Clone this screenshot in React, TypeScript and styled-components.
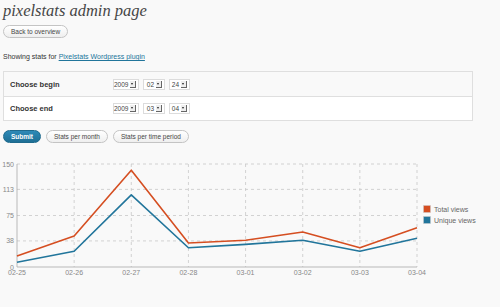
import React from 'react';
import styled, { createGlobalStyle } from 'styled-components';

const colors = {
  page: '#f9f9f9',
  text: '#333333',
  title: '#464646',
  link: '#21759b',
  total: '#d54e21',
  unique: '#21759b',
  border: '#dfdfdf',
  grid: '#c8c8c8',
  axisText: '#888888',
};

const GlobalStyle = createGlobalStyle`
  html, body {
    margin: 0;
    padding: 0;
    background: ${colors.page};
  }
  body {
    font-family: 'Liberation Sans', Arial, sans-serif;
    color: ${colors.text};
  }
`;

const Page = styled.div`
  width: 500px;
  height: 307px;
  overflow: hidden;
  padding: 0 3px;
  box-sizing: border-box;
`;

const Title = styled.h2`
  margin: 0;
  padding-top: 1px;
  font-family: 'Liberation Serif', Georgia, serif;
  font-style: italic;
  font-weight: normal;
  font-size: 16.5px;
  line-height: 20px;
  color: ${colors.title};
`;

const PillButton = styled.button<{ $primary?: boolean }>`
  box-sizing: border-box;
  height: 13px;
  padding: 0 7px;
  border-radius: 7px;
  font-family: 'Liberation Sans', Arial, sans-serif;
  font-size: 6.5px;
  line-height: 11px;
  cursor: pointer;
  border: 1px solid ${(p) => (p.$primary ? '#1e6a8d' : '#c4c4c4')};
  background: ${(p) => (p.$primary ? 'linear-gradient(#2e8ab8, #1f6f95)' : 'linear-gradient(#ffffff, #efefef)')};
  color: ${(p) => (p.$primary ? '#ffffff' : '#464646')};
  font-weight: ${(p) => (p.$primary ? 'bold' : 'normal')};
`;

const BackRow = styled.div`
  margin-top: 4px;
  display: flex;
`;

const Intro = styled.p`
  margin: 14px 0 0;
  font-size: 7px;
  line-height: 9px;

  a {
    color: ${colors.link};
    text-decoration: underline;
  }
`;

const FormTable = styled.div`
  margin-top: 10px;
  width: 470px;
  border: 1px solid ${colors.border};
  box-sizing: border-box;
`;

const FormRow = styled.div<{ $alt?: boolean }>`
  display: grid;
  grid-template-columns: 103px auto;
  align-items: center;
  height: 24px;
  padding-left: 6px;
  background: ${(p) => (p.$alt ? '#ffffff' : '#f9f9f9')};
  border-top: ${(p) => (p.$alt ? `1px solid ${colors.border}` : 'none')};
  box-sizing: border-box;
`;

const RowLabel = styled.span`
  font-weight: bold;
  font-size: 7.5px;
  color: #333;
`;

const Selects = styled.div`
  display: flex;
  gap: 4px;
`;

const FakeSelect = styled.span<{ $w: number }>`
  display: inline-flex;
  align-items: center;
  justify-content: flex-end;
  gap: 2px;
  width: ${(p) => p.$w}px;
  height: 11px;
  padding-right: 2px;
  box-sizing: border-box;
  background: #fff;
  border: 1px solid #dcdcdc;
  font-size: 6.5px;
  color: #444;
`;

const Arrow = styled.span`
  display: inline-block;
  width: 5px;
  height: 6px;
  background: #eee;
  border-right: 1px solid #666;
  border-bottom: 1px solid #666;
  position: relative;

  &::after {
    content: '';
    position: absolute;
    left: 1px;
    top: 2px;
    border-left: 1.5px solid transparent;
    border-right: 1.5px solid transparent;
    border-top: 2px solid #222;
  }
`;

const ButtonRow = styled.div`
  display: flex;
  gap: 5px;
  margin-top: 9px;
`;

const ChartWrap = styled.div`
  margin: 14px 0 0 -3px;
`;

const dates = ['02-25', '02-26', '02-27', '02-28', '03-01', '03-02', '03-03', '03-04'];
const total = [16, 45, 141, 35, 39, 51, 28, 57];
const unique = [7, 23, 105, 28, 33, 39, 23, 42];
const ticks = [0, 38, 75, 113, 150];

const X0 = 17;
const X1 = 417;
const YTOP = 7;
const YBOT = 110;

const px = (i: number) => X0 + ((X1 - X0) / (dates.length - 1)) * i;
const py = (v: number) => YBOT - (v / 150) * (YBOT - YTOP);
const linePoints = (d: number[]) => d.map((v, i) => `${px(i)},${py(v)}`).join(' ');

const Chart: React.FC = () => (
  <svg width="500" height="125" viewBox="0 0 500 125">
    {ticks.slice(1).map((t) => (
      <line key={t} x1={X0} x2={X1} y1={py(t)} y2={py(t)} stroke={colors.grid} strokeWidth="0.8" strokeDasharray="3 3" />
    ))}
    {dates.slice(1).map((d, i) => (
      <line key={d} x1={px(i + 1)} x2={px(i + 1)} y1={YTOP} y2={YBOT} stroke={colors.grid} strokeWidth="0.8" strokeDasharray="3 3" />
    ))}
    <line x1={X0} x2={X0} y1={YTOP} y2={YBOT} stroke="#aaa" strokeWidth="0.8" />
    <line x1={X0} x2={X1} y1={YBOT} y2={YBOT} stroke="#aaa" strokeWidth="0.8" />
    {ticks.map((t) => (
      <text key={t} x={X0 - 3} y={py(t) + 2.5} fontSize="7" textAnchor="end" fill={colors.axisText} fontFamily="Liberation Sans, Arial, sans-serif">
        {t}
      </text>
    ))}
    {dates.map((d, i) => (
      <text key={d} x={px(i)} y={YBOT + 8} fontSize="7" textAnchor="middle" fill={colors.axisText} fontFamily="Liberation Sans, Arial, sans-serif">
        {d}
      </text>
    ))}
    <polyline points={linePoints(total)} fill="none" stroke={colors.total} strokeWidth="1.6" strokeLinejoin="round" />
    <polyline points={linePoints(unique)} fill="none" stroke={colors.unique} strokeWidth="1.6" strokeLinejoin="round" />
    <rect x="423.5" y="48.5" width="7" height="7" fill={colors.total} stroke="#ccc" strokeWidth="0.5" />
    <rect x="423.5" y="59.5" width="7" height="7" fill={colors.unique} stroke="#ccc" strokeWidth="0.5" />
    <text x="434" y="55" fontSize="7" fill="#666" fontFamily="Liberation Sans, Arial, sans-serif">Total views</text>
    <text x="434" y="66" fontSize="7" fill="#666" fontFamily="Liberation Sans, Arial, sans-serif">Unique views</text>
  </svg>
);

const DateSelects: React.FC<{ year: string; month: string; day: string }> = ({ year, month, day }) => (
  <Selects>
    <FakeSelect $w={26}>{year}<Arrow /></FakeSelect>
    <FakeSelect $w={22}>{month}<Arrow /></FakeSelect>
    <FakeSelect $w={21}>{day}<Arrow /></FakeSelect>
  </Selects>
);

const App: React.FC = () => (
  <Page>
    <GlobalStyle />
    <Title>pixelstats admin page</Title>
    <BackRow>
      <PillButton>Back to overview</PillButton>
    </BackRow>
    <Intro>
      Showing stats for <a href="#">Pixelstats Wordpress plugin</a>
    </Intro>
    <FormTable>
      <FormRow>
        <RowLabel>Choose begin</RowLabel>
        <DateSelects year="2009" month="02" day="24" />
      </FormRow>
      <FormRow $alt>
        <RowLabel>Choose end</RowLabel>
        <DateSelects year="2009" month="03" day="04" />
      </FormRow>
    </FormTable>
    <ButtonRow>
      <PillButton $primary>Submit</PillButton>
      <PillButton>Stats per month</PillButton>
      <PillButton>Stats per time period</PillButton>
    </ButtonRow>
    <ChartWrap>
      <Chart />
    </ChartWrap>
  </Page>
);

export default App;
